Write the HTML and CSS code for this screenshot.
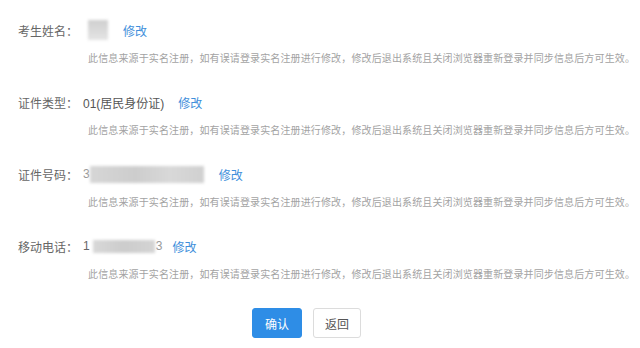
FILE: index.html
```html
<!DOCTYPE html>
<html lang="zh-CN">
<head>
<meta charset="utf-8">
<link rel="stylesheet" href="styles.css">
</head>
<body>
<div class="page">
  <div class="field">
    <div class="line">
      <span class="label">考生姓名：</span>
      <span class="value"><span class="blur blur-name"></span></span>
      <a class="edit">修改</a>
    </div>
    <div class="note">此信息来源于实名注册，如有误请登录实名注册进行修改，修改后退出系统且关闭浏览器重新登录并同步信息后方可生效。</div>
  </div>
  <div class="field">
    <div class="line">
      <span class="label">证件类型：</span>
      <span class="value">01(居民身份证)</span>
      <a class="edit">修改</a>
    </div>
    <div class="note">此信息来源于实名注册，如有误请登录实名注册进行修改，修改后退出系统且关闭浏览器重新登录并同步信息后方可生效。</div>
  </div>
  <div class="field">
    <div class="line">
      <span class="label">证件号码：</span>
      <span class="value"><span class="digit faint">3</span><span class="blur blur-id"></span></span>
      <a class="edit">修改</a>
    </div>
    <div class="note">此信息来源于实名注册，如有误请登录实名注册进行修改，修改后退出系统且关闭浏览器重新登录并同步信息后方可生效。</div>
  </div>
  <div class="field">
    <div class="line">
      <span class="label">移动电话：</span>
      <span class="value"><span class="digit">1</span><span class="blur blur-phone"></span><span class="digit faint">3</span></span>
      <a class="edit edit-tight">修改</a>
    </div>
    <div class="note">此信息来源于实名注册，如有误请登录实名注册进行修改，修改后退出系统且关闭浏览器重新登录并同步信息后方可生效。</div>
  </div>
  <div class="actions">
    <button class="btn btn-primary">确认</button>
    <button class="btn btn-default">返回</button>
  </div>
</div>
</body>
</html>
```
FILE: styles.css
```css
html, body {
  margin: 0;
  padding: 0;
  background: #fff;
}
body {
  font-family: "Liberation Sans", "Noto Sans CJK SC", sans-serif;
  width: 640px;
  height: 348px;
  overflow: hidden;
}
.page {
  padding: 20px 0 0 18px;
  display: flex;
  flex-direction: column;
}
.field {
  display: flex;
  flex-direction: column;
  gap: 12px;
  margin-bottom: 26px;
}
.field:last-of-type {
  margin-bottom: 23px;
}
.line {
  display: flex;
  align-items: center;
  height: 20px;
  font-size: 12px;
}
.label {
  width: 65px;
  color: #666;
  flex: none;
}
.value {
  display: flex;
  align-items: center;
  color: #555;
}
.edit {
  color: #3f8fdb;
  margin-left: 14px;
  cursor: pointer;
}
.edit-tight {
  margin-left: 10px;
}
.digit {
  color: #666;
}
.faint {
  color: #999;
}
.blur {
  display: inline-block;
  background: linear-gradient(#cfcfcf, #e4e4e4);
  filter: blur(1.5px);
}
.blur-name {
  width: 20px;
  height: 20px;
  margin-left: 5px;
  margin-right: 1px;
}
.blur-id {
  width: 114px;
  height: 17px;
  margin-left: 0;
  margin-right: 1px;
  background: linear-gradient(90deg, #d6d6d6, #cdcdcd 40%, #d8d8d8 70%, #d0d0d0);
}
.blur-phone {
  width: 62px;
  height: 13px;
  margin: 0 1px 0 3px;
  background: linear-gradient(90deg, #d8d8d8, #cccccc 50%, #d4d4d4);
}
.note {
  font-size: 10px;
  line-height: 14px;
  letter-spacing: 0.13px;
  color: #a3a3a3;
  padding-left: 70px;
  white-space: nowrap;
}
.actions {
  display: flex;
  gap: 11px;
  padding-left: 234px;
}
.btn {
  height: 30px;
  border-radius: 3px;
  font-family: "Liberation Sans", "Noto Sans CJK SC", sans-serif;
  font-size: 12px;
  padding: 0;
  cursor: pointer;
}
.btn-primary {
  width: 50px;
  background: #2e8de6;
  border: 1px solid #2e8de6;
  color: #fff;
}
.btn-default {
  width: 48px;
  background: #fff;
  border: 1px solid #dcdcdc;
  color: #555;
}
```
